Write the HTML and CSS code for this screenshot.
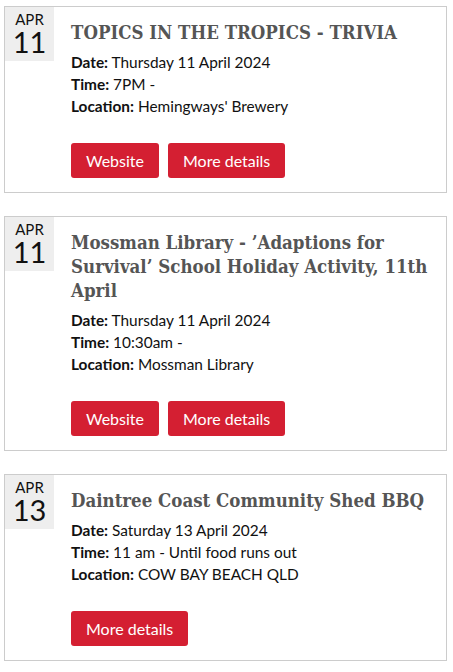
FILE: index.html
```html
<!DOCTYPE html>
<html lang="en">
<head>
  <meta charset="UTF-8" />
  <meta name="viewport" content="width=device-width, initial-scale=1.0" />
  <title>Events</title>
  <link rel="stylesheet" href="styles.css">
</head>
<body>
  <!-- Event list -->
  <div class="event">
    <div class="event-date">
      <span class="month">APR</span>
      <span class="day">11</span>
    </div>
    <div class="event-body">
      <h2 class="event-title">TOPICS IN THE TROPICS - TRIVIA</h2>
      <p><strong>Date:</strong> Thursday 11 April 2024</p>
      <p><strong>Time:</strong> 7PM -</p>
      <p><strong>Location:</strong> Hemingways' Brewery</p>
      <div class="event-links">
        <a href="#" class="btn">Website</a>
        <a href="#" class="btn">More details</a>
      </div>
    </div>
  </div>

  <div class="event">
    <div class="event-date">
      <span class="month">APR</span>
      <span class="day">11</span>
    </div>
    <div class="event-body">
      <h2 class="event-title">Mossman Library - ’Adaptions for Survival’ School Holiday Activity, 11th April</h2>
      <p><strong>Date:</strong> Thursday 11 April 2024</p>
      <p><strong>Time:</strong> 10:30am -</p>
      <p><strong>Location:</strong> Mossman Library</p>
      <div class="event-links">
        <a href="#" class="btn">Website</a>
        <a href="#" class="btn">More details</a>
      </div>
    </div>
  </div>

  <div class="event">
    <div class="event-date">
      <span class="month">APR</span>
      <span class="day">13</span>
    </div>
    <div class="event-body">
      <h2 class="event-title">Daintree Coast Community Shed BBQ</h2>
      <p><strong>Date:</strong> Saturday 13 April 2024</p>
      <p><strong>Time:</strong> 11 am - Until food runs out</p>
      <p><strong>Location:</strong> COW BAY BEACH QLD</p>
      <div class="event-links">
        <a href="#" class="btn">More details</a>
      </div>
    </div>
  </div>
</body>
</html>
```

FILE: styles.css
```css
body {
  background-color: #fff;
  color: #111;
  font-family: Lato, "Open Sans", sans-serif;
  margin: 0;
  padding: 6px 6px 0 4px;
}
.event {
  display: flex;
  align-items: flex-start;
  border: 1px solid #ccc;
  margin-bottom: 23px;
}
.event-date {
  flex: none;
  width: 49px;
  padding: 4px 0 5px;
  background-color: #eee;
  text-align: center;
  color: #111;
}
.event-date .month {
  display: block;
  font-size: 15px;
  line-height: 17px;
}
.event-date .day {
  display: block;
  font-size: 29px;
  line-height: 28px;
}
.event-body {
  flex: 1;
  padding: 14px 8px 14px 17px;
}
.event-title {
  font-family: "DejaVu Serif", serif;
  font-stretch: condensed;
  font-weight: bold;
  font-size: 18.5px;
  line-height: 24px;
  color: #555;
  margin: 0 0 6px;
}
.event-body p {
  font-size: 15.4px;
  line-height: 22px;
  margin: 0;
}
.event-links {
  display: flex;
  gap: 9px;
  margin-top: 26px;
}
.btn {
  display: block;
  background-color: #d41f32;
  color: #fff;
  text-decoration: none;
  font-size: 16px;
  line-height: 35px;
  padding: 0 15px;
  border-radius: 3px;
}
```
